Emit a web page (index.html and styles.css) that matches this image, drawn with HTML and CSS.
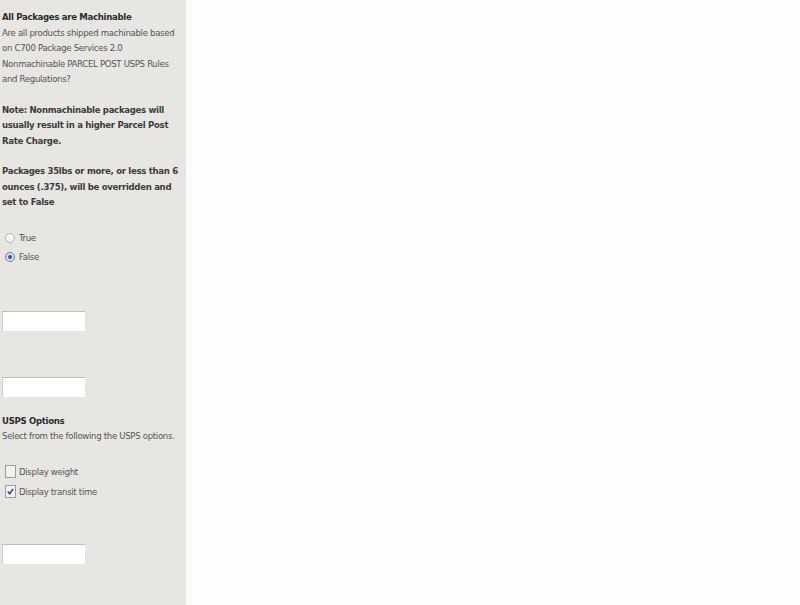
FILE: index.html
```html
<!DOCTYPE html>
<html>
<head>
<meta charset="utf-8">
<link rel="stylesheet" href="styles.css">
</head>
<body>
<div class="page">
  <aside class="side">
    <div class="title">All Packages are Machinable</div>
    <div class="desc">Are all products shipped machinable based on C700 Package Services 2.0 Nonmachinable PARCEL POST USPS Rules and Regulations?</div>
    <div class="note">Note: Nonmachinable packages will usually result in a higher Parcel Post Rate Charge.</div>
    <div class="note">Packages 35lbs or more, or less than 6 ounces (.375), will be overridden and set to False</div>
    <div class="choices">
      <label class="row"><span class="radio"></span>True</label>
      <label class="row"><span class="radio on"></span>False</label>
    </div>
    <div class="field f1"></div>
    <div class="field f2"></div>
    <div class="title t2">USPS Options</div>
    <div class="desc">Select from the following the USPS options.</div>
    <div class="checks">
      <label class="row crow"><span class="check"></span>Display weight</label>
      <label class="row crow"><span class="check on"><svg viewBox="0 0 10 10" width="9" height="9"><path d="M2 5 L4 7.5 L8 2" fill="none" stroke="#2a3d9c" stroke-width="1.6"/></svg></span>Display transit time</label>
    </div>
    <div class="field f3"></div>
  </aside>
  <main class="main"></main>
</div>
</body>
</html>
```
FILE: styles.css
```css
html, body {
  margin: 0;
  padding: 0;
  background: #fdfdfd;
}
.page {
  display: flex;
  width: 800px;
  height: 605px;
}
.side {
  width: 186px;
  background: #e7e6e2;
  padding: 9px 0 0 2px;
  box-sizing: border-box;
  font-family: "DejaVu Sans Condensed", "DejaVu Sans", sans-serif;
  font-size: 9.5px;
  line-height: 15.5px;
  letter-spacing: -0.3px;
  color: #4a4a4a;
}
.main {
  flex: 1;
}
.title {
  font-weight: bold;
  color: #2c2c2c;
}
.desc {
  color: #555;
}
.note {
  font-weight: bold;
  color: #3c3c3c;
  margin-top: 15px;
}
.choices {
  margin-top: 19px;
}
.row {
  display: flex;
  align-items: center;
  height: 19px;
  color: #555;
}
.radio {
  width: 8px;
  height: 8px;
  border-radius: 50%;
  border: 1px solid #b4b4b4;
  background: #f4f4f4;
  margin: 0 4px 0 3px;
  box-sizing: content-box;
  position: relative;
}
.radio.on {
  border-color: #6b7fa8;
  background: #d9e1f0;
}
.radio.on::after {
  content: "";
  position: absolute;
  left: 2px;
  top: 2px;
  width: 4px;
  height: 4px;
  border-radius: 50%;
  background: #2d55a0;
}
.field {
  width: 83px;
  height: 20px;
  background: #fff;
  border-top: 1px solid #bdbdbd;
  border-left: 1px solid #cfcfcf;
  box-sizing: border-box;
}
.f1 { margin-top: 44px; }
.f2 { margin-top: 46px; }
.t2 { margin-top: 16px; }
.checks {
  margin-top: 18px;
}
.crow {
  height: 20px;
}
.check {
  width: 9px;
  height: 11px;
  border: 1px solid #9c9c9c;
  background: #f2f2f2;
  margin: 0 3px 0 3px;
  display: flex;
  align-items: center;
  justify-content: center;
}
.f3 { margin-top: 42px; }
```
